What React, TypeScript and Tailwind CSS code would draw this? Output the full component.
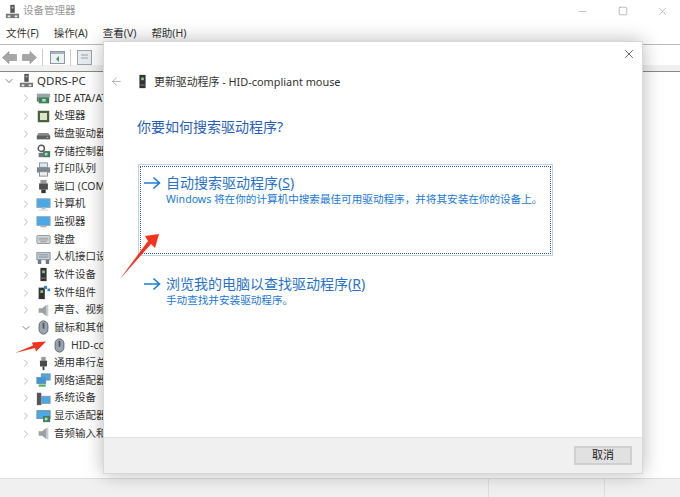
import React from 'react';
import { ArrowLeft, ChevronDown, ChevronRight, Minus, Square, X } from 'lucide-react';

// ─── Small device icons ───────────────────────────────────────────────────────
type IconName =
  | 'pc' | 'ide' | 'cpu' | 'disk' | 'storage' | 'printer' | 'port' | 'computer' | 'monitor'
  | 'keyboard' | 'hid' | 'soft' | 'softpart' | 'sound' | 'mouse' | 'usb' | 'network' | 'system' | 'display';

const DeviceIcon = ({ name }: { name: IconName }) => {
  const body: Record<IconName, React.ReactNode> = {
    pc: <><rect x="6" y="1" width="5" height="9" fill="#555" /><rect x="7.5" y="3" width="2" height="2" fill="#bbb" /><rect x="1" y="11" width="15" height="5" fill="#777" /><rect x="3" y="13" width="3" height="2" fill="#eee" /><rect x="11" y="13" width="3" height="2" fill="#eee" /></>,
    ide: <><rect x="1" y="3" width="15" height="4" fill="#9aa5a8" /><rect x="3" y="7" width="12" height="7" fill="#3f7f5f" /><rect x="7" y="9" width="4" height="3" fill="#b5e0c0" /><rect x="1" y="7" width="2" height="5" fill="#666" /></>,
    cpu: <><rect x="2" y="2" width="13" height="13" fill="#47603f" /><rect x="4.5" y="4.5" width="8" height="8" fill="#dfe6c8" /></>,
    disk: <><path d="M3 8h11l2 3v4H1v-4z" fill="#8a8a8a" /><rect x="1" y="11" width="15" height="4" fill="#5e5e5e" /><rect x="12" y="12.5" width="2" height="1" fill="#9be09b" /></>,
    storage: <><circle cx="6" cy="5" r="3.5" fill="none" stroke="#555" strokeWidth="1.6" /><path d="M3 10h5v5H3z" fill="#777" /><rect x="8" y="8" width="8" height="7" fill="#3f7f5f" /><rect x="10" y="10" width="3" height="3" fill="#b5e0c0" /></>,
    printer: <><rect x="4" y="1" width="9" height="5" fill="#dfe7ee" stroke="#7d94a8" /><rect x="1" y="6" width="15" height="6" fill="#7a8894" /><rect x="4" y="11" width="9" height="5" fill="#eee" stroke="#888" /></>,
    port: <><rect x="5" y="1" width="7" height="4" fill="#9a9a9a" /><rect x="3.5" y="5" width="10" height="7" fill="#4f4f4f" /><rect x="6" y="12" width="5" height="4" fill="#333" /></>,
    computer: <><rect x="1" y="2" width="15" height="10" fill="#4aa8e6" stroke="#8fa8b8" /><rect x="6" y="12" width="5" height="2" fill="#b8c4cc" /><rect x="3" y="14" width="11" height="1.5" fill="#d8dee2" /></>,
    monitor: <><rect x="1" y="3" width="15" height="10" fill="#4aa8e6" stroke="#8fa8b8" /><rect x="5" y="13" width="7" height="2" fill="#a8b4bc" /></>,
    keyboard: <><rect x="1" y="4" width="15" height="9" rx="1" fill="#d4d8da" stroke="#8a8f92" /><path d="M3 7h11M3 9h11M5 11h7" stroke="#8f9497" strokeWidth="1" /></>,
    hid: <><rect x="1" y="3" width="15" height="8" fill="#c8d0d6" stroke="#7f8a92" /><path d="M3 5.5h11M3 8h11" stroke="#78848c" /><rect x="2" y="11" width="4" height="5" rx="1" fill="#6f7b84" /><rect x="11" y="11" width="4" height="5" rx="1" fill="#6f7b84" /></>,
    soft: <><rect x="5" y="1" width="7" height="15" fill="#333" /><rect x="7" y="4" width="3" height="3" fill="#7fd08f" /><rect x="6" y="12" width="5" height="1" fill="#888" /></>,
    softpart: <><rect x="3" y="3" width="7" height="13" fill="#333" /><rect x="5" y="6" width="3" height="3" fill="#7fd08f" /><rect x="9" y="1" width="3.5" height="3.5" fill="#2f86d8" /><rect x="13" y="4" width="3" height="3" fill="#2f86d8" /></>,
    sound: <><path d="M3 6h4l5-4v13l-5-4H3z" fill="#9aa0a4" /><path d="M12 2v13h2V2z" fill="#c8ccce" /></>,
    mouse: <><rect x="3.5" y="1" width="10" height="15" rx="5" fill="#98a4ae" stroke="#555f68" /><rect x="7.5" y="3" width="2" height="7" rx="1" fill="#4f5860" /></>,
    usb: <><rect x="6" y="1" width="5" height="4" fill="#9a9a9a" /><rect x="4.5" y="5" width="8" height="7" rx="1" fill="#4a4a4a" /><rect x="7.5" y="12" width="2" height="4" fill="#333" /></>,
    network: <><rect x="6" y="1" width="10" height="7" fill="#4aa8e6" stroke="#6f8ea6" /><rect x="1" y="5" width="10" height="7" fill="#3b97d8" stroke="#6f8ea6" /><rect x="3" y="13" width="8" height="2.5" fill="#4fb05a" /></>,
    system: <><rect x="1" y="2" width="5" height="14" fill="#555" /><rect x="6" y="6" width="10" height="8" fill="#4aa8e6" stroke="#7f97a8" /></>,
    display: <><rect x="1" y="3" width="15" height="9" fill="#4aa8e6" stroke="#6f8ea6" /><rect x="8" y="9" width="8" height="7" fill="#3f7f5f" /><rect x="10" y="11" width="3" height="3" fill="#b5e0c0" /></>,
  };
  return <svg width="15" height="15" viewBox="0 0 17 17" className="ml-px shrink-0">{body[name]}</svg>;
};

// ─── Tree data ────────────────────────────────────────────────────────────────
const TREE: { label: string; icon: IconName; open?: boolean; leaf?: boolean }[] = [
  { label: 'IDE ATA/ATAPI 控制器', icon: 'ide' },
  { label: '处理器', icon: 'cpu' },
  { label: '磁盘驱动器', icon: 'disk' },
  { label: '存储控制器', icon: 'storage' },
  { label: '打印队列', icon: 'printer' },
  { label: '端口 (COM 和 LPT)', icon: 'port' },
  { label: '计算机', icon: 'computer' },
  { label: '监视器', icon: 'monitor' },
  { label: '键盘', icon: 'keyboard' },
  { label: '人机接口设备', icon: 'hid' },
  { label: '软件设备', icon: 'soft' },
  { label: '软件组件', icon: 'softpart' },
  { label: '声音、视频和游戏控制器', icon: 'sound' },
  { label: '鼠标和其他指针设备', icon: 'mouse', open: true },
  { label: 'HID-compliant mouse', icon: 'mouse', leaf: true },
  { label: '通用串行总线控制器', icon: 'usb' },
  { label: '网络适配器', icon: 'network' },
  { label: '系统设备', icon: 'system' },
  { label: '显示适配器', icon: 'display' },
  { label: '音频输入和输出', icon: 'sound' },
];

const Row = ({ label, icon, open, leaf }: { label: string; icon: IconName; open?: boolean; leaf?: boolean }) => (
  <div className={`flex h-[17.65px] items-center whitespace-nowrap ${leaf ? 'pl-[51px]' : 'pl-[20px]'}`}>
    {!leaf && (open
      ? <ChevronDown className="mr-[3px] h-[12px] w-[12px] shrink-0 text-[#555]" strokeWidth={1.5} />
      : <ChevronRight className="mr-[3px] h-[12px] w-[12px] shrink-0 text-[#a0a0a0]" strokeWidth={1.5} />)}
    <DeviceIcon name={icon} />
    <span className={leaf ? 'ml-[4px]' : 'ml-[3px]'}>{label}</span>
  </div>
);

// gray toolbar arrows
const ToolArrow = ({ flip }: { flip?: boolean }) => (
  <svg width="15" height="13" viewBox="0 0 15 13" className={flip ? 'rotate-180' : ''}>
    <path d="M0.5 6.5L7 0.5V3.5H14.5V9.5H7V12.5Z" fill="#a6a6a6" stroke="#8c8c8c" strokeWidth="0.6" />
  </svg>
);

const BlueArrow = () => (
  <svg width="17" height="14" viewBox="0 0 17 14" className="shrink-0">
    <path d="M0 7H15.5M9.5 1.5L15.5 7L9.5 12.5" fill="none" stroke="#1a7fd4" strokeWidth="1.6" />
  </svg>
);

const Option = ({ title, hint, sub, focused }: { title: string; hint: string; sub: string; focused?: boolean }) => (
  <div className={focused ? 'h-[92px] border border-[#b5d5f0] p-[1px]' : 'mt-[12px] px-[2px]'}>
    <div className={focused ? 'h-full border border-dotted border-[#555] pl-[3px] pt-[6px]' : 'pl-[4px] pt-[6px]'}>
      <div className="flex items-center">
        <BlueArrow />
        <span className="ml-[5px] text-[14px] leading-[19px] text-[#2a72c8]">
          {title}(<span className="underline">{hint}</span>)
        </span>
      </div>
      <div className="ml-[22px] text-[10.6px] leading-[14px] text-[#1a78d8]">{sub}</div>
    </div>
  </div>
);

const RedArrow = ({ className, box, d }: { className: string; box: string; d: string }) => (
  <svg viewBox={box} className={className}><path d={d} fill="#f5321e" /></svg>
);

export default function App() {
  return (
    <div className="relative h-[497px] w-[680px] overflow-hidden bg-white font-['Noto_Sans','Noto_Sans_CJK_SC',sans-serif] text-[10.5px] text-[#333]">
      {/* Device manager window */}
      <div className="flex h-full flex-col">
        <div className="flex h-[22px] shrink-0 items-center pl-[4px] pr-[11px]">
          <DeviceIcon name="pc" />
          <span className="ml-[3px] text-[#999]">设备管理器</span>
          <div className="ml-auto flex items-center gap-[28.5px] text-[#a8a8a8]">
            <Minus className="h-[13px] w-[13px]" strokeWidth={1.2} />
            <Square className="h-[10px] w-[10px]" strokeWidth={1.8} />
            <X className="h-[13px] w-[13px]" strokeWidth={1.2} />
          </div>
        </div>
        <div className="flex h-[22px] shrink-0 items-center gap-[15px] pl-[6px] pt-[2px]">
          <span>文件(F)</span><span>操作(A)</span><span>查看(V)</span><span>帮助(H)</span>
        </div>
        <div className="flex h-[27px] shrink-0 items-center border-t border-b-[6px] border-t-[#bbb] border-b-[#f0f0f0] pl-[2px] pt-[4px]">
          <ToolArrow />
          <span className="ml-[5px]"><ToolArrow flip /></span>
          <div className="mx-[5px] h-[17px] w-px bg-[#ccc]" />
          <svg width="15" height="13" viewBox="0 0 15 13" className="ml-[2px]"><rect x="0.5" y="0.5" width="14" height="12" fill="#eef1f4" stroke="#8d9aa6" /><rect x="1" y="1" width="13" height="2" fill="#aab4bc" /><path d="M6 8l3-3v6z" fill="#3fa05a" /></svg>
          <div className="mx-[5px] h-[17px] w-px bg-[#ccc]" />
          <svg width="15" height="15" viewBox="0 0 15 15" className="ml-[1px]"><rect x="0.5" y="0.5" width="14" height="14" fill="#e8ebee" stroke="#9aa4ac" /><path d="M4 5h7M4 8h7" stroke="#9aa4ac" /></svg>
        </div>
        <div className="flex-1 border-t border-[#888]">
          <div className="flex h-[17.65px] items-center whitespace-nowrap pl-[3px] text-[11.5px]">
            <ChevronDown className="mr-[3px] h-[12px] w-[12px] shrink-0 text-[#555]" strokeWidth={1.5} />
            <DeviceIcon name="pc" />
            <span className="ml-[3px]">QDRS-PC</span>
          </div>
          {TREE.map(r => <Row key={r.label} {...r} />)}
        </div>
        <div className="flex h-[19px] shrink-0 border-t border-[#ddd] bg-[#f0f0f0]">
          <div className="w-[488px]" />
          <div className="w-[117px] border-x border-[#ddd]" />
        </div>
      </div>

      <RedArrow className="absolute left-[13px] top-[338px] h-[18px] w-[36px]" box="0 0 36 18" d="M2 15 L20 7.5 L19 4.5 L33 3.5 L23 13.5 L22 10 Z" />

      {/* Update driver dialog */}
      <div className="absolute left-[103px] top-[41px] flex h-[433px] w-[540px] flex-col border border-[#d8d8d8] bg-white shadow-[0_0_18px_rgba(0,0,0,0.28)]">
        <div className="flex justify-end pr-[6px] pt-[5px]">
          <X className="h-[14px] w-[14px] text-[#444]" strokeWidth={1.4} />
        </div>
        <div className="mt-[12px] flex items-center pl-[6px]">
          <ArrowLeft className="h-[13px] w-[13px] text-[#aaa]" strokeWidth={1.6} />
          <span className="ml-[11px]"><DeviceIcon name="soft" /></span>
          <span className="ml-[4px] text-[10.9px] leading-[17px] text-[#333]">更新驱动程序 - HID-compliant mouse</span>
        </div>
        <div className="ml-[33px] mt-[27px] text-[14px] leading-[20px] text-[#2a5fb8]">你要如何搜索驱动程序?</div>
        <div className="ml-[34px] mr-[89px] mt-[27px]">
          <Option focused title="自动搜索驱动程序" hint="S" sub="Windows 将在你的计算机中搜索最佳可用驱动程序，并将其安装在你的设备上。" />
          <Option title="浏览我的电脑以查找驱动程序" hint="R" sub="手动查找并安装驱动程序。" />
        </div>
        <div className="mt-auto flex h-[36px] items-center justify-end border-t border-[#e2e2e2] bg-[#f0f0f0] pr-[10px]">
          <div className="flex h-[19px] w-[58px] items-center justify-center border-2 border-[#cfcfcf] bg-[#e1e1e1] text-[11px] text-[#222]">取消</div>
        </div>
      </div>

      <RedArrow className="absolute left-[118px] top-[232px] h-[50px] w-[44px]" box="0 0 44 50" d="M2 47 L30 9 L27 4 L41 2 L37 16 L33 12 Z" />
    </div>
  );
}
